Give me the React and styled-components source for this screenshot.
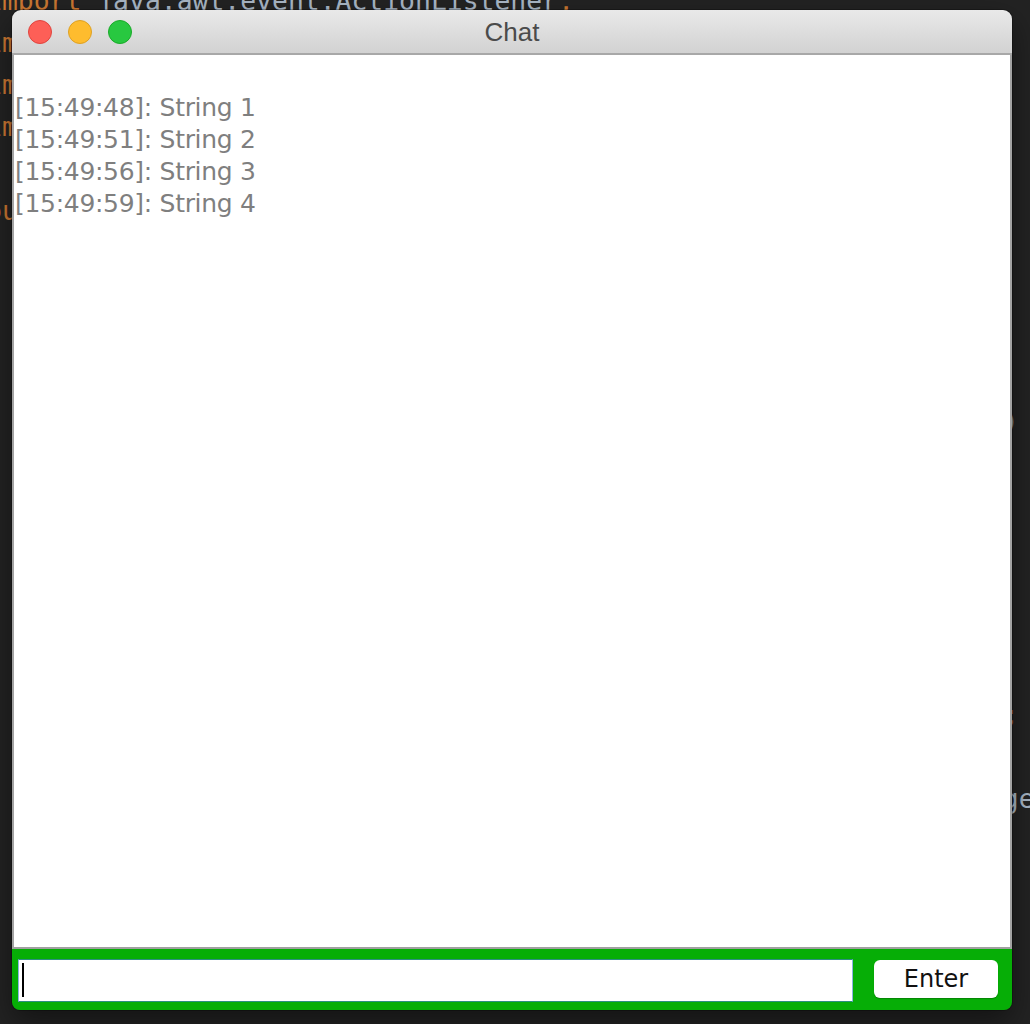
import React from "react";
import styled, { createGlobalStyle } from "styled-components";

const Global = createGlobalStyle`
  html, body { margin: 0; padding: 0; background: #232323; }
  #root { width: 1030px; height: 1024px; }
`;

const Desktop = styled.div`
  position: relative;
  width: 1030px;
  height: 1024px;
  overflow: hidden;
  background: #232323;
`;

const Code = styled.div`
  margin: -20px 0 0 -14px;
  font-family: "DejaVu Sans Mono", "Liberation Mono", monospace;
  font-size: 26.4px;
  line-height: 42px;
  white-space: pre;
  color: #a9b7c6;
`;

const CodeLine = styled.div`
  height: 42px;
`;

const Tok = styled.span`
  color: ${(p) => (p.$kw ? "#cc7832" : "#a9b7c6")};
`;

const Window = styled.div`
  position: absolute;
  left: 12px;
  top: 10px;
  width: 1000px;
  height: 1000px;
  display: flex;
  flex-direction: column;
  border-radius: 9px 9px 8px 8px;
  overflow: hidden;
  box-shadow: 0 12px 30px rgba(0, 0, 0, 0.45), 0 0 0 1px rgba(0, 0, 0, 0.25);
`;

const TitleBar = styled.div`
  height: 43px;
  flex: none;
  display: grid;
  grid-template-columns: 1fr auto 1fr;
  align-items: center;
  padding: 0 16px;
  background: linear-gradient(#e9e9e9, #d2d2d2);
  border-bottom: 2px solid #a8a8a8;
`;

const Lights = styled.div`
  display: flex;
  gap: 16px;
  align-items: center;
`;

const Light = styled.span`
  width: 24px;
  height: 24px;
  box-sizing: border-box;
  border-radius: 50%;
  background: ${(p) => p.$bg};
  border: 1px solid ${(p) => p.$bd};
`;

const Title = styled.div`
  font-family: "Liberation Sans", Arial, sans-serif;
  font-size: 26px;
  color: #4b4b4b;
  padding-top: 1px;
`;

const TextArea = styled.div`
  flex: 1;
  background: #fff;
  border-left: 2px solid #a3a3a3;
  border-right: 2px solid #a3a3a3;
  border-bottom: 2px solid #a0a0a0;
  padding: 5px 0 0 1px;
  font-family: "DejaVu Sans", Verdana, sans-serif;
  font-size: 25px;
  letter-spacing: -0.3px;
  line-height: 32px;
  color: #7f7f7f;
`;

const LogLine = styled.div`
  min-height: 32px;
  white-space: pre;
`;

const BottomBar = styled.div`
  height: 61px;
  flex: none;
  display: flex;
  align-items: flex-start;
  gap: 21px;
  padding: 10px 14px 0 6px;
  box-sizing: border-box;
  background: #06ae06;
`;

const InputBox = styled.div`
  width: 835px;
  height: 43px;
  box-sizing: border-box;
  background: #fff;
  border-top: 1px solid #2c8f80;
  border-bottom: 1px solid #2c8f80;
  border-left: 1px solid #8ab4e2;
  border-right: 1px solid #8ab4e2;
  padding: 3px 0 0 3px;
`;

const Caret = styled.span`
  display: block;
  width: 2px;
  height: 34px;
  background: #000;
`;

const Button = styled.button`
  width: 124px;
  height: 38px;
  margin-top: 1px;
  border: none;
  border-radius: 6px;
  background: #fff;
  box-shadow: 0 1px 1px rgba(0, 0, 0, 0.25);
  font-family: "DejaVu Sans", Verdana, sans-serif;
  font-size: 24px;
  color: #111;
  padding: 0;
  cursor: pointer;
`;

const pad = (s, n) => s.padEnd(n, " ");

const codeLines = [
  [["import", 1], [" java.awt.event.ActionListener", 0], [";", 1]],
  [["import", 1], [" javax.swing.*", 0], [";", 1]],
  [["import", 1], [" java.awt.*", 0], [";", 1]],
  [["import", 1], [" java.text.SimpleDateFormat", 0], [";", 1]],
  [],
  [["public class", 1], [" Chat ", 0], ["extends", 1], [" JFrame {", 0]],
  [["    private", 1], [" JTextArea textArea = ", 0], ["new", 1], [" JTextArea()", 0], [";", 1]],
  [["    private", 1], [" JTextField textField = ", 0], ["new", 1], [" JTextField()", 0], [";", 1]],
  [["    private", 1], [" JButton button = ", 0], ["new", 1], [" JButton(\"Enter\")", 0], [";", 1]],
  [],
  [[pad("    public Chat() { super(\"Chat\"); setSize(500, 500", 64) + ")", 0]],
  [["        setDefaultCloseOperation(JFrame.EXIT_ON_CLOSE)", 0], [";", 1]],
  [["        textArea.setEditable(", 0], ["false", 1], [")", 0], [";", 1]],
  [["        add(textArea, BorderLayout.CENTER)", 0], [";", 1]],
  [["        JPanel panel = ", 0], ["new", 1], [" JPanel(", 0], ["new", 1], [" BorderLayout())", 0], [";", 1]],
  [["        panel.setBackground(Color.GREEN)", 0], [";", 1]],
  [["        panel.add(textField, BorderLayout.CENTER)", 0], [";", 1]],
  [[pad("        panel.add(button, BorderLayout.EAST)", 64), 0], [";", 1]],
  [["        add(panel, BorderLayout.SOUTH)", 0], [";", 1]],
  [[pad("        String time = format.format(new Date()); String messa", 64) + "ge = textField.getText();", 0]],
  [["        setVisible(", 0], ["true", 1], [")", 0], [";", 1]],
  [["    }", 0]],
  [["}", 0]],
];

const messages = [
  "",
  "[15:49:48]: String 1",
  "[15:49:51]: String 2",
  "[15:49:56]: String 3",
  "[15:49:59]: String 4",
];

export default function App() {
  return (
    <>
      <Global />
      <Desktop>
        <Code>
          {codeLines.map((line, i) => (
            <CodeLine key={i}>
              {line.map(([t, kw], j) => (
                <Tok key={j} $kw={!!kw}>
                  {t}
                </Tok>
              ))}
            </CodeLine>
          ))}
        </Code>
        <Window>
          <TitleBar>
            <Lights>
              <Light $bg="#fd5f57" $bd="#e0443e" />
              <Light $bg="#febc2e" $bd="#dea123" />
              <Light $bg="#28c840" $bd="#1aab29" />
            </Lights>
            <Title>Chat</Title>
            <span />
          </TitleBar>
          <TextArea>
            {messages.map((m, i) => (
              <LogLine key={i}>{m}</LogLine>
            ))}
          </TextArea>
          <BottomBar>
            <InputBox>
              <Caret />
            </InputBox>
            <Button>Enter</Button>
          </BottomBar>
        </Window>
      </Desktop>
    </>
  );
}
